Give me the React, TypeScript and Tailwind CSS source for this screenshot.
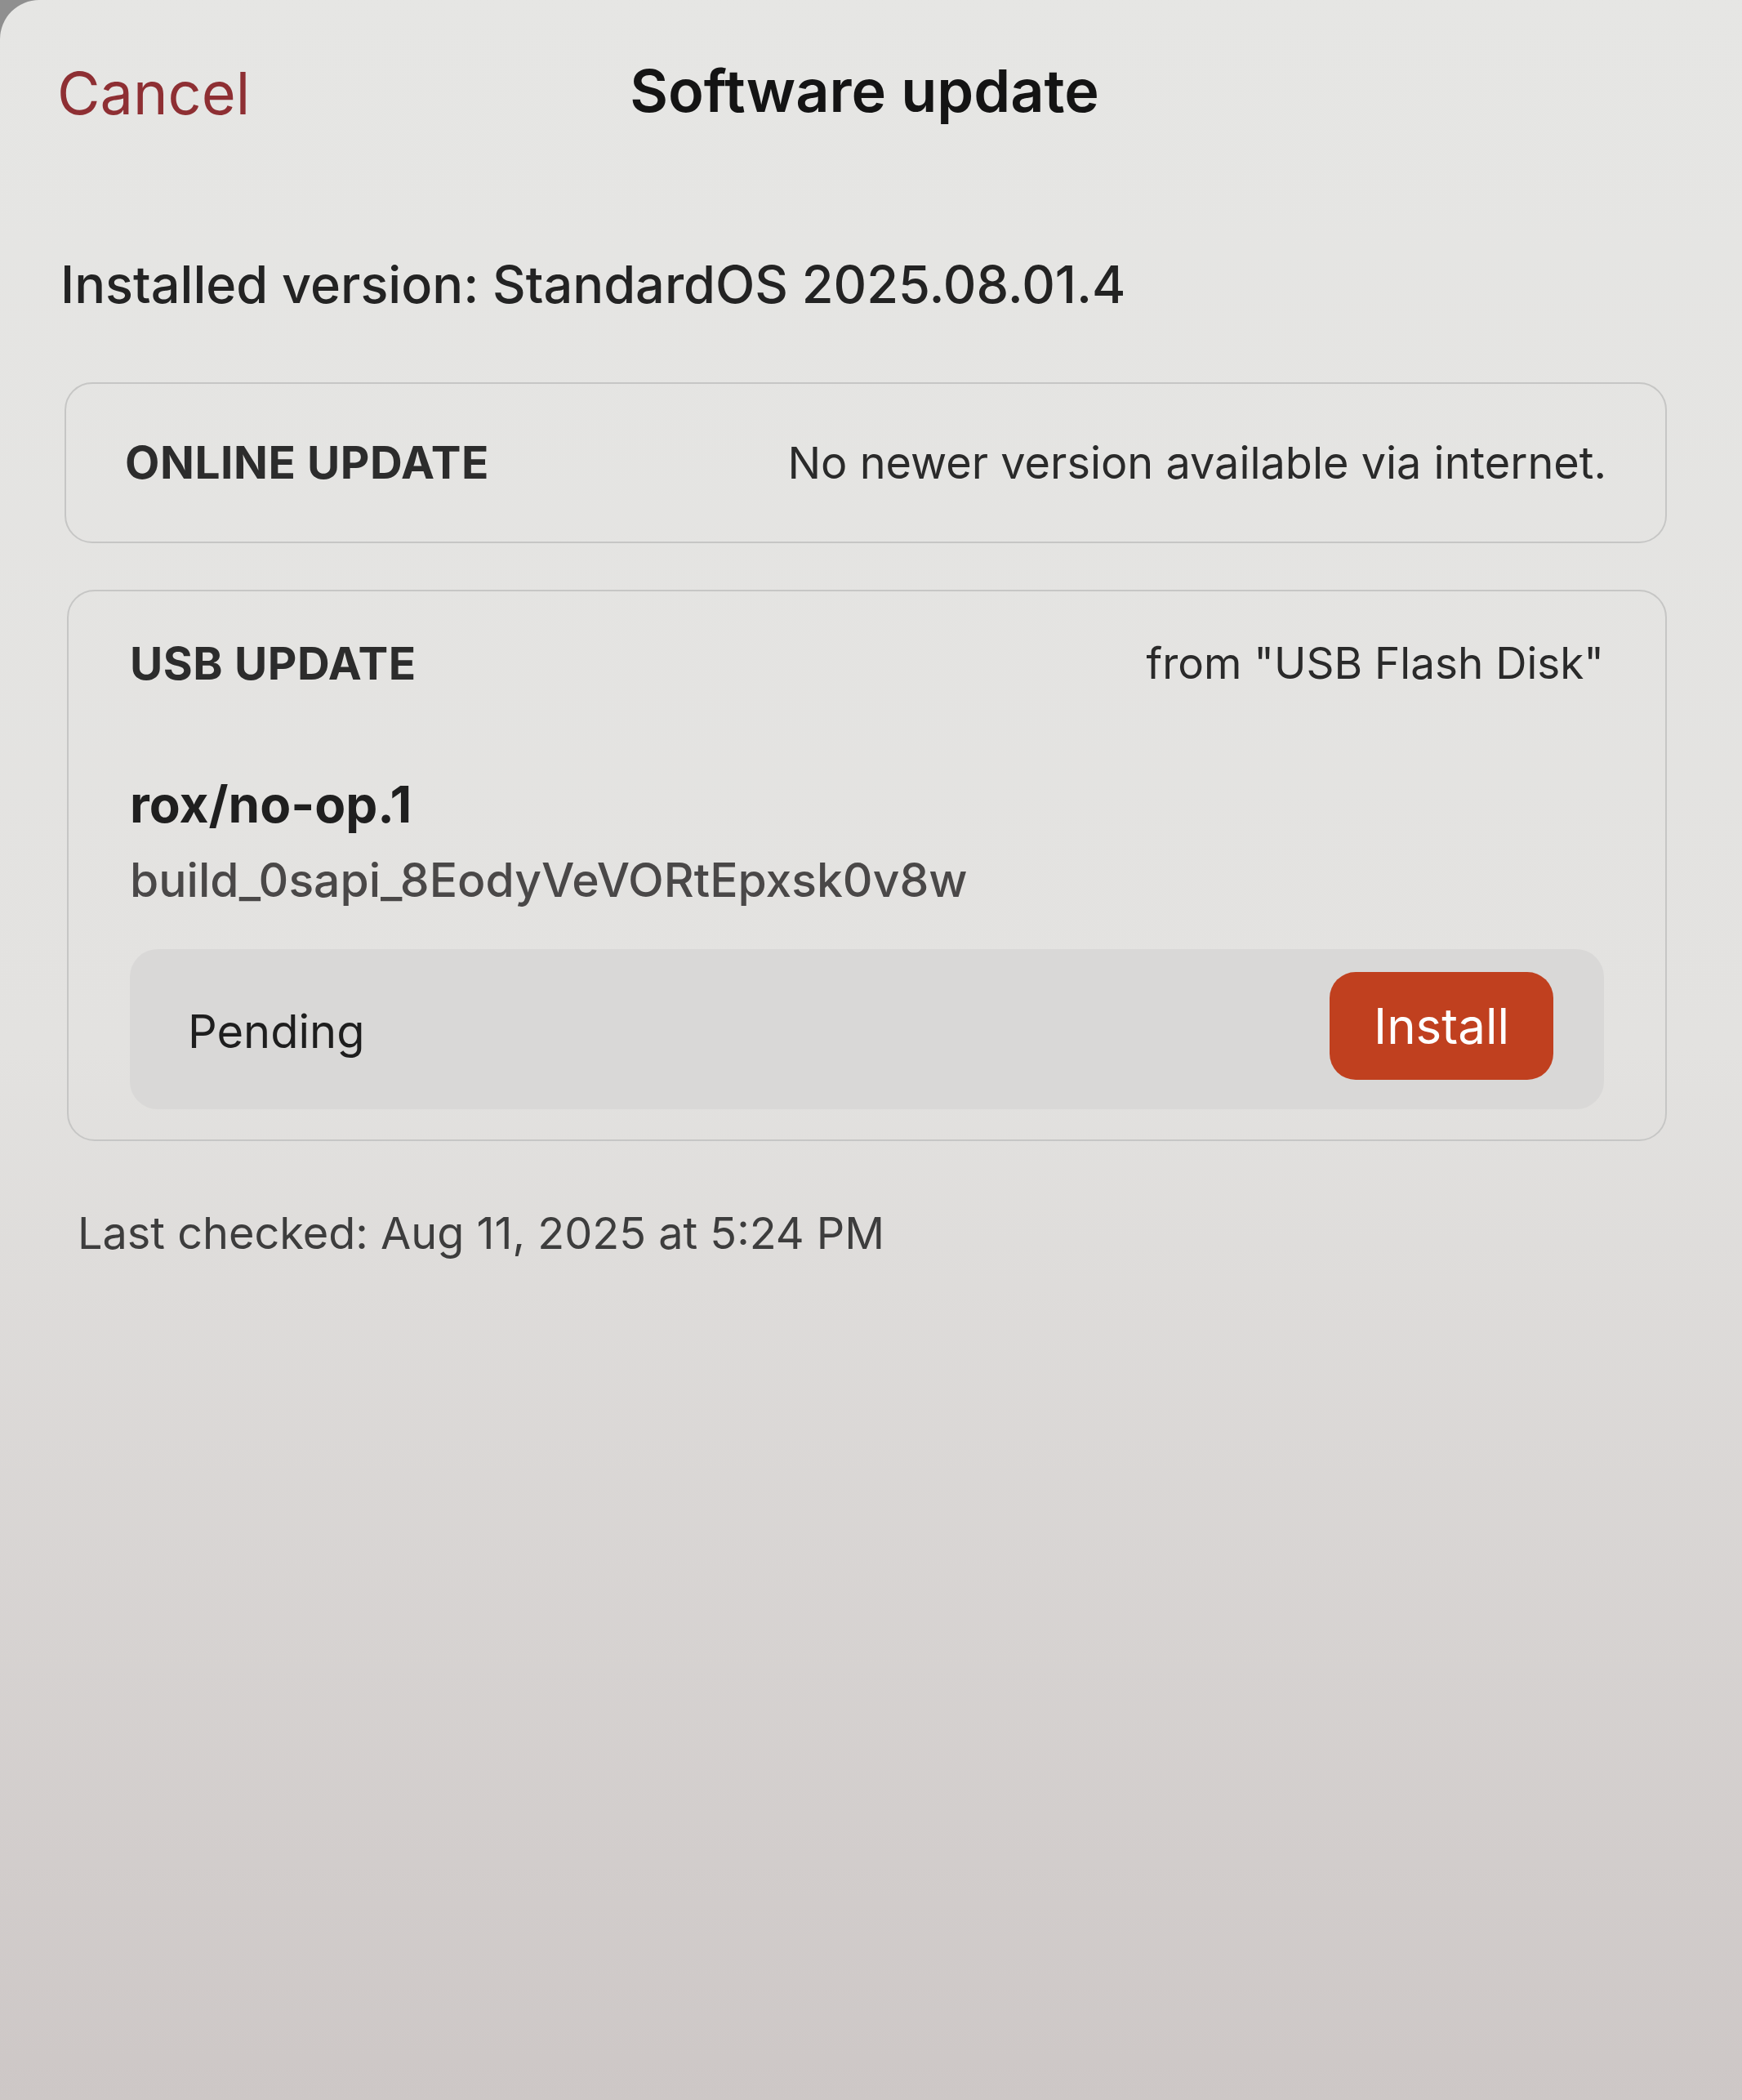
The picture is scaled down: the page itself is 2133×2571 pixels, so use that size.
import React from "react";

const font = "font-['Inter','Noto_Sans',sans-serif]";

function OnlineCard() {
  return (
    <div className="ml-[79px] mr-[92px] mt-[88px] flex h-[197px] items-center justify-between rounded-[34px] border-2 border-[#c6c6c5] px-[72px]">
      <span className="text-[55px] font-bold leading-none tracking-[0.01em] text-[#2c2c2c]">
        ONLINE UPDATE
      </span>
      <span className="text-[54px] leading-none text-[#2a2a2a]">
        No newer version available via internet.
      </span>
    </div>
  );
}

function UsbCard() {
  return (
    <div className="ml-[82px] mr-[92px] mt-[57px] rounded-[34px] border-2 border-[#c6c6c5] px-[75px] pb-[37px] pt-[61px]">
      <div className="flex items-center justify-between">
        <span className="text-[55px] font-bold leading-none tracking-[0.01em] text-[#2c2c2c]">
          USB UPDATE
        </span>
        <span className="text-[53px] leading-none text-[#2a2a2a]">
          from "USB Flash Disk"
        </span>
      </div>

      <div className="mt-[114px] text-[62px] font-bold leading-none text-[#1f1f1f]">
        rox/no-op.1
      </div>
      <div className="mt-[33px] text-[57px] font-medium leading-none text-[#4a4848]">
        build_0sapi_8EodyVeVORtEpxsk0v8w
      </div>

      <div className="mt-[56px] flex h-[196px] items-center justify-between rounded-[34px] bg-[#d9d8d7] pl-[71px] pr-[62px]">
        <span className="mt-[6px] text-[56px] leading-none text-[#1e1e1e]">Pending</span>
        <button
          type="button"
          className="mb-[8px] flex h-[132px] w-[274px] items-center justify-center rounded-[32px] bg-[#c0401f] text-[60px] leading-none text-white"
        >
          Install
        </button>
      </div>
    </div>
  );
}

export default function App() {
  return (
    <div className="min-h-[2571px] w-full bg-[#8f8f8f]">
      <div
        className={`${font} min-h-[2571px] w-full rounded-tl-[48px] bg-linear-to-b from-[#e6e6e4] via-[#e3e2e0] to-[#cdc7c6] pb-20`}
      >
        <header className="grid grid-cols-[1fr_auto_1fr] items-center px-[70px] pt-[72px]">
          <button
            type="button"
            className="mt-[6px] justify-self-start text-[72px] leading-none text-[#8e2f33]"
          >
            Cancel
          </button>
          <h1 className="mr-[16px] text-[72px] font-semibold leading-none text-[#141414]">
            Software update
          </h1>
          <div />
        </header>

        <p className="ml-[74px] mt-[167px] text-[63px] font-medium leading-none text-[#232323]">
          Installed version: StandardOS 2025.08.01.4
        </p>

        <OnlineCard />
        <UsbCard />

        <p className="ml-[95px] mt-[86px] text-[54px] leading-none text-[#3d3d3d]">
          Last checked: Aug 11, 2025 at 5:24 PM
        </p>
      </div>
    </div>
  );
}
